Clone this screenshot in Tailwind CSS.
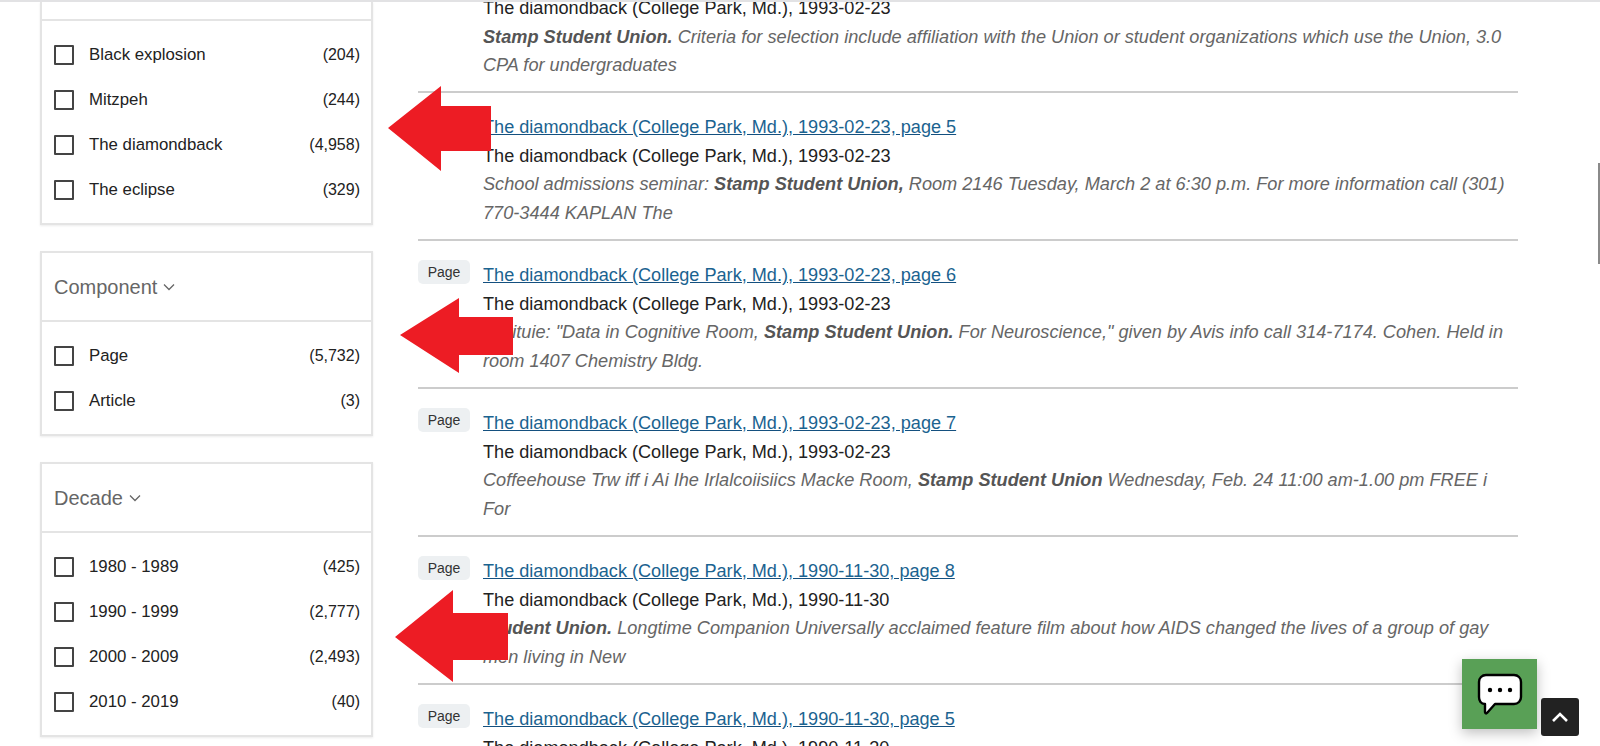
<!DOCTYPE html>
<html lang="en">
<head>
    <meta charset="UTF-8">
    <meta name="viewport" content="width=device-width, initial-scale=1.0">
    <title>Search results</title>
    <script src="https://cdn.jsdelivr.net/npm/@tailwindcss/browser@4"></script>
</head>
<body class="bg-white h-[746px] overflow-hidden font-['Liberation_Sans',Arial,sans-serif]">
    <div class="relative h-[746px] overflow-hidden border-t-2 border-[#e2e2e4]">
        <div class="flex pl-10 gap-[45px]">

            <!-- Facets -->
            <aside class="w-[333px] shrink-0">
                <div class="border-2 border-t-0 border-[#e4e4e4] shadow-[0_1px_2px_rgba(0,0,0,0.08)]">
                    <div class="h-[19px] border-b-2 border-[#e4e4e4]"></div>
                    <ul class="py-[11px] pl-3 pr-[11px] text-[16.8px] text-[#222]">
                        <li class="flex items-center h-[45px]"><input type="checkbox" class="appearance-none w-5 h-5 border-2 border-[#444] rounded-[1px] mr-[15px]"><span class="flex-1">Black explosion</span><span class="text-[16px]">(204)</span></li>
                        <li class="flex items-center h-[45px]"><input type="checkbox" class="appearance-none w-5 h-5 border-2 border-[#444] rounded-[1px] mr-[15px]"><span class="flex-1">Mitzpeh</span><span class="text-[16px]">(244)</span></li>
                        <li class="flex items-center h-[45px]"><input type="checkbox" class="appearance-none w-5 h-5 border-2 border-[#444] rounded-[1px] mr-[15px]"><span class="flex-1">The diamondback</span><span class="text-[16px]">(4,958)</span></li>
                        <li class="flex items-center h-[45px]"><input type="checkbox" class="appearance-none w-5 h-5 border-2 border-[#444] rounded-[1px] mr-[15px]"><span class="flex-1">The eclipse</span><span class="text-[16px]">(329)</span></li>
                    </ul>
                </div>

                <div class="mt-[26px] border-2 border-[#e4e4e4] shadow-[0_1px_2px_rgba(0,0,0,0.08)]">
                    <div class="h-[69px] flex items-center gap-[6px] pl-3 border-b-2 border-[#e4e4e4] text-[20px] text-[#666]">
                        Component
                        <svg class="w-3 h-3 mt-[1px]" viewBox="0 0 12 12" fill="none" stroke="#666" stroke-width="1.3"><path d="M1 3.5l5 5 5-5"/></svg>
                    </div>
                    <ul class="py-[11px] pl-3 pr-[11px] text-[16.8px] text-[#222]">
                        <li class="flex items-center h-[45px]"><input type="checkbox" class="appearance-none w-5 h-5 border-2 border-[#444] rounded-[1px] mr-[15px]"><span class="flex-1">Page</span><span class="text-[16px]">(5,732)</span></li>
                        <li class="flex items-center h-[45px]"><input type="checkbox" class="appearance-none w-5 h-5 border-2 border-[#444] rounded-[1px] mr-[15px]"><span class="flex-1">Article</span><span class="text-[16px]">(3)</span></li>
                    </ul>
                </div>

                <div class="mt-[26px] border-2 border-[#e4e4e4] shadow-[0_1px_2px_rgba(0,0,0,0.08)]">
                    <div class="h-[69px] flex items-center gap-[6px] pl-3 border-b-2 border-[#e4e4e4] text-[20px] text-[#666]">
                        Decade
                        <svg class="w-3 h-3 mt-[1px]" viewBox="0 0 12 12" fill="none" stroke="#666" stroke-width="1.3"><path d="M1 3.5l5 5 5-5"/></svg>
                    </div>
                    <ul class="py-[11px] pl-3 pr-[11px] text-[16.8px] text-[#222]">
                        <li class="flex items-center h-[45px]"><input type="checkbox" class="appearance-none w-5 h-5 border-2 border-[#444] rounded-[1px] mr-[15px]"><span class="flex-1">1980 - 1989</span><span class="text-[16px]">(425)</span></li>
                        <li class="flex items-center h-[45px]"><input type="checkbox" class="appearance-none w-5 h-5 border-2 border-[#444] rounded-[1px] mr-[15px]"><span class="flex-1">1990 - 1999</span><span class="text-[16px]">(2,777)</span></li>
                        <li class="flex items-center h-[45px]"><input type="checkbox" class="appearance-none w-5 h-5 border-2 border-[#444] rounded-[1px] mr-[15px]"><span class="flex-1">2000 - 2009</span><span class="text-[16px]">(2,493)</span></li>
                        <li class="flex items-center h-[45px]"><input type="checkbox" class="appearance-none w-5 h-5 border-2 border-[#444] rounded-[1px] mr-[15px]"><span class="flex-1">2010 - 2019</span><span class="text-[16px]">(40)</span></li>
                    </ul>
                </div>
            </aside>

            <!-- Results -->
            <main class="w-[1100px] shrink-0 text-[18.13px] leading-[28.5px] text-[#222]">
                <div class="flex h-[91px] border-b-2 border-[#ccc]">
                    <div class="w-[65px] shrink-0"></div>
                    <div class="flex-1">
                        <p class="-mt-[8px]">The diamondback (College Park, Md.), 1993-02-23</p>
                        <p class="italic text-[18.17px] text-[#666]"><b class="text-[#555]">Stamp Student Union.</b> Criteria for selection include affiliation with the Union or student organizations which use the Union, 3.0 CPA for undergraduates</p>
                    </div>
                </div>

                <div class="flex h-[148px] pt-[20px] border-b-2 border-[#ccc]">
                    <div class="w-[65px] shrink-0"><span class="block w-[52px] h-[24px] -mt-[1px] rounded-[5px] bg-[#edf0f2] text-[14px] leading-[24px] text-center text-[#333]">Page</span></div>
                    <div class="flex-1">
                        <a href="#" class="block underline decoration-[#14507f] text-[#1b6390]">The diamondback (College Park, Md.), 1993-02-23, page 5</a>
                        <p>The diamondback (College Park, Md.), 1993-02-23</p>
                        <p class="italic text-[18.17px] text-[#666]">School admissions seminar: <b class="text-[#555]">Stamp Student Union,</b> Room 2146 Tuesday, March 2 at 6:30 p.m. For more information call (301) 770-3444 KAPLAN The</p>
                    </div>
                </div>

                <div class="flex h-[148px] pt-[20px] border-b-2 border-[#ccc]">
                    <div class="w-[65px] shrink-0"><span class="block w-[52px] h-[24px] -mt-[1px] rounded-[5px] bg-[#edf0f2] text-[14px] leading-[24px] text-center text-[#333]">Page</span></div>
                    <div class="flex-1">
                        <a href="#" class="block underline decoration-[#14507f] text-[#1b6390]">The diamondback (College Park, Md.), 1993-02-23, page 6</a>
                        <p>The diamondback (College Park, Md.), 1993-02-23</p>
                        <p class="italic text-[18.17px] text-[#666]">Instituie: "Data in Cognitive Room, <b class="text-[#555]">Stamp Student Union.</b> For Neuroscience," given by Avis info call 314-7174. Cohen. Held in room 1407 Chemistry Bldg.</p>
                    </div>
                </div>

                <div class="flex h-[148px] pt-[20px] border-b-2 border-[#ccc]">
                    <div class="w-[65px] shrink-0"><span class="block w-[52px] h-[24px] -mt-[1px] rounded-[5px] bg-[#edf0f2] text-[14px] leading-[24px] text-center text-[#333]">Page</span></div>
                    <div class="flex-1">
                        <a href="#" class="block underline decoration-[#14507f] text-[#1b6390]">The diamondback (College Park, Md.), 1993-02-23, page 7</a>
                        <p>The diamondback (College Park, Md.), 1993-02-23</p>
                        <p class="italic text-[18.17px] text-[#666]">Coffeehouse Trw iff i Ai Ihe Irlalcoiisiics Macke Room, <b class="text-[#555]">Stamp Student Union</b> Wednesday, Feb. 24 11:00 am-1.00 pm FREE i For</p>
                    </div>
                </div>

                <div class="flex h-[148px] pt-[20px] border-b-2 border-[#ccc]">
                    <div class="w-[65px] shrink-0"><span class="block w-[52px] h-[24px] -mt-[1px] rounded-[5px] bg-[#edf0f2] text-[14px] leading-[24px] text-center text-[#333]">Page</span></div>
                    <div class="flex-1">
                        <a href="#" class="block underline decoration-[#14507f] text-[#1b6390]">The diamondback (College Park, Md.), 1990-11-30, page 8</a>
                        <p>The diamondback (College Park, Md.), 1990-11-30</p>
                        <p class="italic text-[18.17px] text-[#666]"><b class="text-[#555]">Student Union.</b> Longtime Companion Universally acclaimed feature film about how AIDS changed the lives of a group of gay men living in New</p>
                    </div>
                </div>

                <div class="flex pt-[20px]">
                    <div class="w-[65px] shrink-0"><span class="block w-[52px] h-[24px] -mt-[1px] rounded-[5px] bg-[#edf0f2] text-[14px] leading-[24px] text-center text-[#333]">Page</span></div>
                    <div class="flex-1">
                        <a href="#" class="block underline decoration-[#14507f] text-[#1b6390]">The diamondback (College Park, Md.), 1990-11-30, page 5</a>
                        <p>The diamondback (College Park, Md.), 1990-11-30</p>
                    </div>
                </div>
            </main>
        </div>

        <!-- Annotation arrows drawn over the page -->
        <svg class="absolute left-[388px] top-[84px]" width="103" height="85" viewBox="0 0 103 85"><path d="M0 42 53 0V20H103V65H53V85Z" fill="#ed1c24"/></svg>
        <svg class="absolute left-[400px] top-[296px]" width="113" height="75" viewBox="0 0 113 75"><path d="M0 37 59 0V19H113V57H59V75Z" fill="#ed1c24"/></svg>
        <svg class="absolute left-[395px] top-[588px]" width="113" height="92" viewBox="0 0 113 92"><path d="M0 47 58 0V23H113V70H58V92Z" fill="#ed1c24"/></svg>

        <!-- Chat widget -->
        <button class="absolute left-[1462px] top-[657px] w-[75px] h-[70px] bg-[#59a056] shadow-[0_4px_12px_rgba(0,0,0,0.25)] flex items-center justify-center">
            <svg width="46" height="42" viewBox="0 0 46 42"><path d="M9 2H37C41 2 44 5 44 9V24C44 28 41 31 37 31H18L10 40C9 41 8 40 8 39V31C4 31 2 28 2 24V9C2 5 5 2 9 2Z" fill="#fff" stroke="#000" stroke-width="2.4" stroke-linejoin="round"/><circle cx="13" cy="17" r="2.2"/><circle cx="23" cy="17" r="2.2"/><circle cx="33" cy="17" r="2.2"/></svg>
        </button>

        <!-- Back to top -->
        <button class="absolute left-[1541px] top-[696px] w-[38px] h-[38px] rounded-[3px] bg-[#222] flex items-center justify-center">
            <svg width="18" height="12" viewBox="0 0 18 12" fill="none" stroke="#fff" stroke-width="2.6"><path d="M2 10 9 3l7 7"/></svg>
        </button>

        <!-- Scrollbar thumb -->
        <div class="absolute right-0 top-[161px] w-[2px] h-[101px] bg-[#8a8a8a]"></div>
    </div>
</body>
</html>
